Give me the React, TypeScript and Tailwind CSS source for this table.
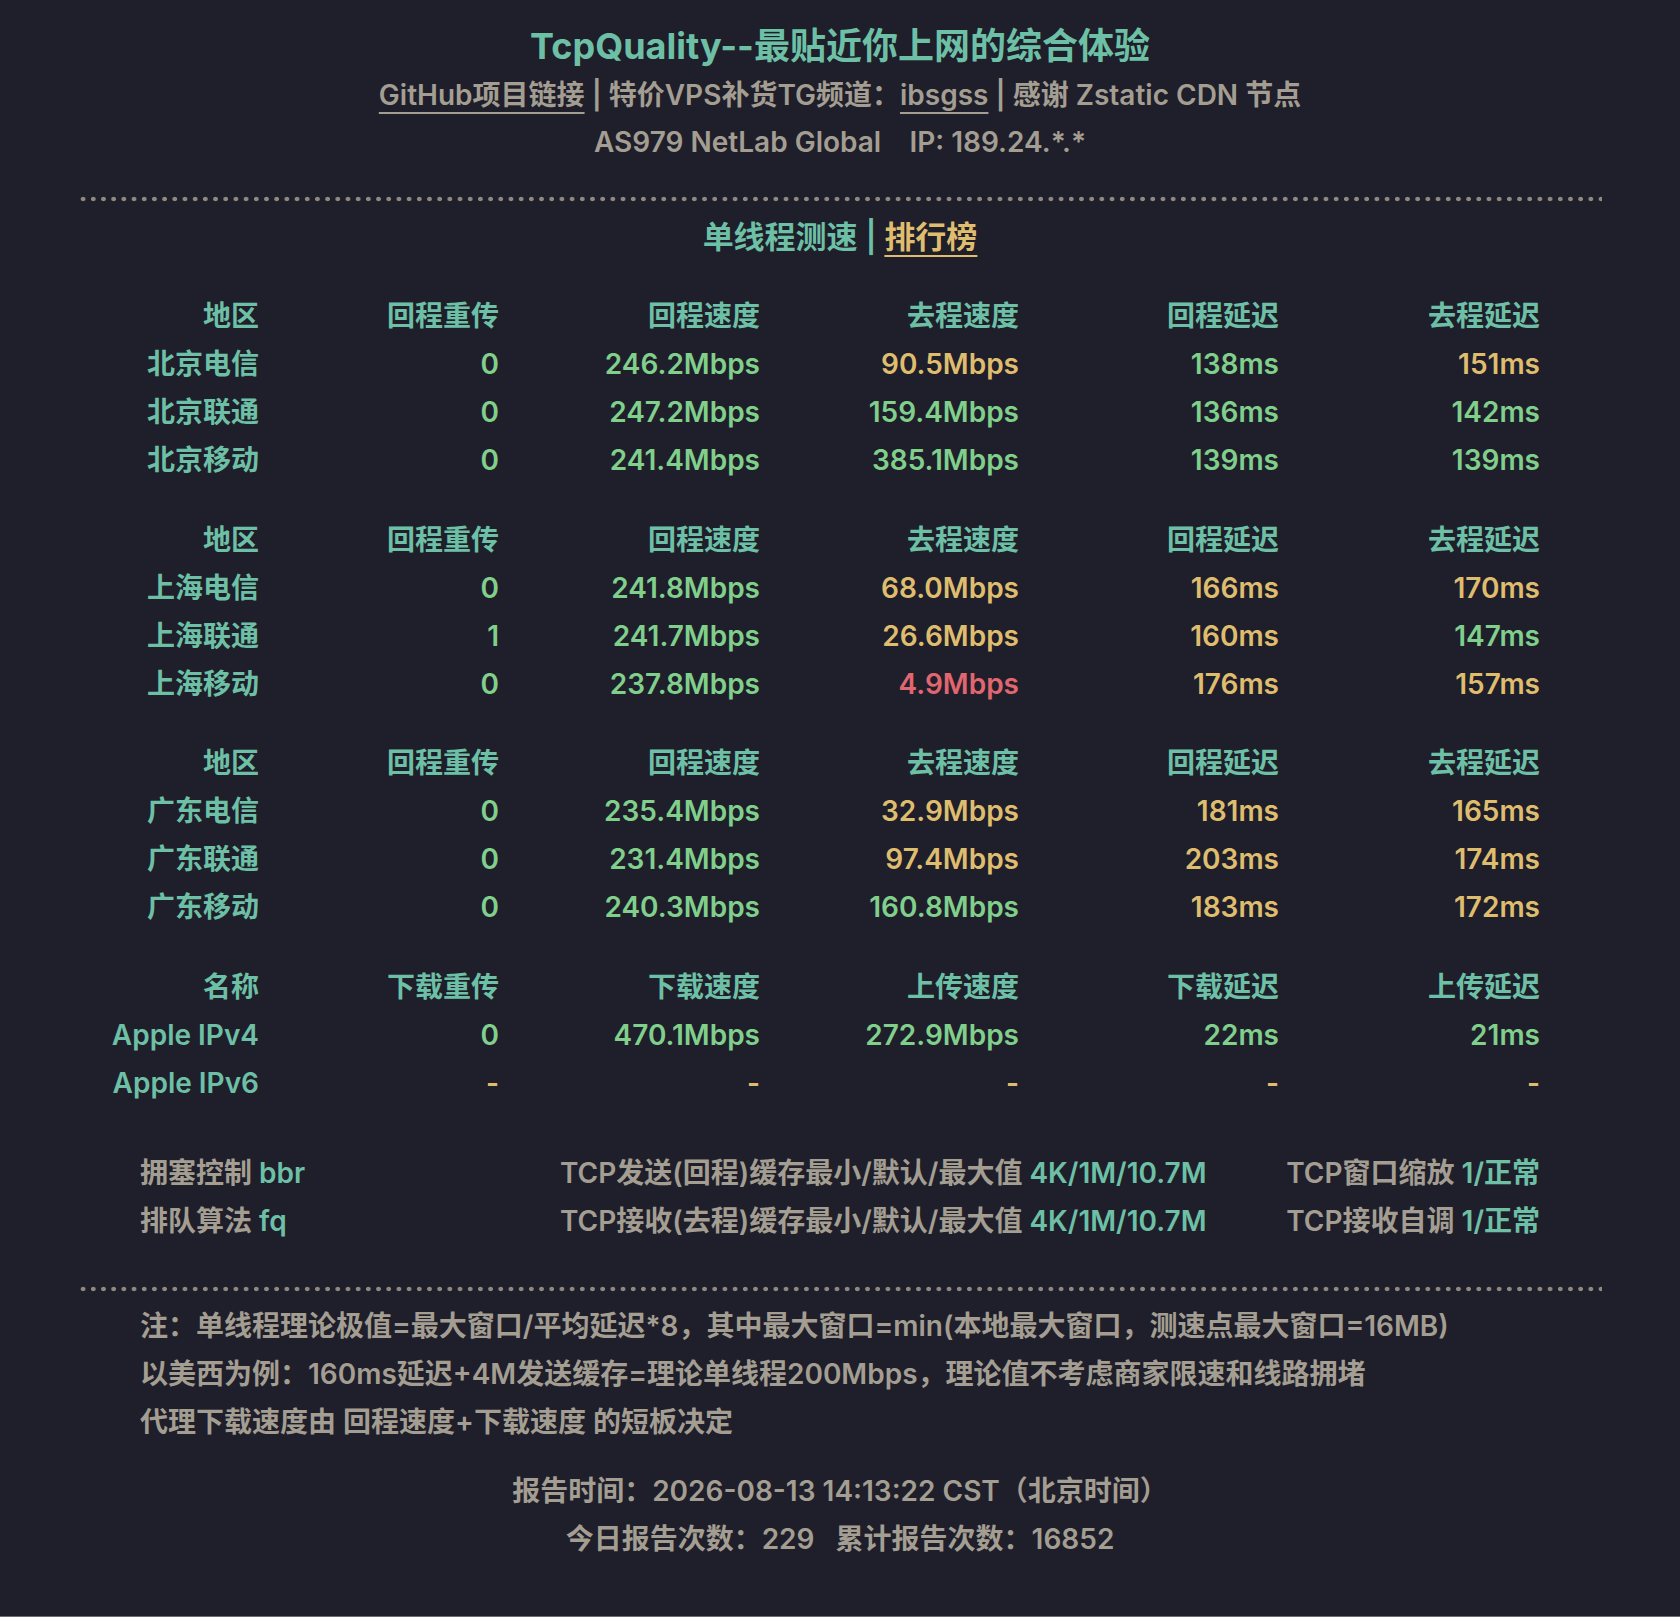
import React from "react";

type Tone = "g" | "y" | "r";

const tone: Record<Tone, string> = {
  g: "text-[#80cf8b]",
  y: "text-[#dfbd6e]",
  r: "text-[#e0666f]",
};

type Row = { name: string; cells: [string, Tone][] };
type Group = { head: string[]; rows: Row[] };

const speedHead = ["地区", "回程重传", "回程速度", "去程速度", "回程延迟", "去程延迟"];

const groups: Group[] = [
  {
    head: speedHead,
    rows: [
      { name: "北京电信", cells: [["0", "g"], ["246.2Mbps", "g"], ["90.5Mbps", "y"], ["138ms", "g"], ["151ms", "y"]] },
      { name: "北京联通", cells: [["0", "g"], ["247.2Mbps", "g"], ["159.4Mbps", "g"], ["136ms", "g"], ["142ms", "g"]] },
      { name: "北京移动", cells: [["0", "g"], ["241.4Mbps", "g"], ["385.1Mbps", "g"], ["139ms", "g"], ["139ms", "g"]] },
    ],
  },
  {
    head: speedHead,
    rows: [
      { name: "上海电信", cells: [["0", "g"], ["241.8Mbps", "g"], ["68.0Mbps", "y"], ["166ms", "y"], ["170ms", "y"]] },
      { name: "上海联通", cells: [["1", "g"], ["241.7Mbps", "g"], ["26.6Mbps", "y"], ["160ms", "y"], ["147ms", "g"]] },
      { name: "上海移动", cells: [["0", "g"], ["237.8Mbps", "g"], ["4.9Mbps", "r"], ["176ms", "y"], ["157ms", "y"]] },
    ],
  },
  {
    head: speedHead,
    rows: [
      { name: "广东电信", cells: [["0", "g"], ["235.4Mbps", "g"], ["32.9Mbps", "y"], ["181ms", "y"], ["165ms", "y"]] },
      { name: "广东联通", cells: [["0", "g"], ["231.4Mbps", "g"], ["97.4Mbps", "y"], ["203ms", "y"], ["174ms", "y"]] },
      { name: "广东移动", cells: [["0", "g"], ["240.3Mbps", "g"], ["160.8Mbps", "g"], ["183ms", "y"], ["172ms", "y"]] },
    ],
  },
  {
    head: ["名称", "下载重传", "下载速度", "上传速度", "下载延迟", "上传延迟"],
    rows: [
      { name: "Apple IPv4", cells: [["0", "g"], ["470.1Mbps", "g"], ["272.9Mbps", "g"], ["22ms", "g"], ["21ms", "g"]] },
      { name: "Apple IPv6", cells: [["-", "y"], ["-", "y"], ["-", "y"], ["-", "y"], ["-", "y"]] },
    ],
  },
];

const Dots = () => (
  <div className="h-[6px] w-full bg-[radial-gradient(circle,#8e8a7f_2px,transparent_2.6px)] bg-[length:10.2px_6px] bg-repeat-x" />
);

const cell = "h-[48px] leading-[48px] text-right whitespace-nowrap";

const App: React.FC = () => {
  return (
    <div className="min-h-[1617px] bg-[#1f1e2b] border-b border-[#6d6c76] font-['Inter','Noto_Sans_CJK_SC',sans-serif] font-semibold text-[28px] text-[#a39e91]">
      <div className="mx-auto w-[1524px] pt-[22px] pb-[52px]">
        {/* Header */}
        <div className="flex flex-col items-center">
          <h1 className="h-[50px] leading-[49px] text-[36px] font-bold text-[#6dc0a5]">
            TcpQuality--最贴近你上网的综合体验
          </h1>
          <div className="h-[46px] leading-[47px] whitespace-pre">
            <span className="underline decoration-2 underline-offset-[7px]">GitHub项目链接</span>
            <span> | </span>
            <span>特价VPS补货TG频道：</span>
            <span className="underline decoration-2 underline-offset-[7px]">ibsgss</span>
            <span> | </span>
            <span>感谢 Zstatic CDN 节点</span>
          </div>
          <div className="h-[48px] leading-[48px] whitespace-pre">AS979 NetLab Global    IP: 189.24.*.*</div>
        </div>

        <div className="mt-[30px]">
          <Dots />
        </div>

        <div className="mt-[11px] h-[48px] leading-[48px] text-center text-[31px] whitespace-pre text-[#6dc0a5]">
          单线程测速 | <span className="text-[#dfbd6e] underline decoration-2 underline-offset-[7px]">排行榜</span>
        </div>

        {/* Tables */}
        <div className="mt-[31px] ml-[22px] flex flex-col gap-[31.5px]">
          {groups.map((g, gi) => (
            <div key={gi} className="grid grid-cols-[159px_240px_261px_259px_260px_261px]">
              {g.head.map((h) => (
                <div key={h} className={`${cell} text-[#6dc0a5]`}>
                  {h}
                </div>
              ))}
              {g.rows.map((r) => (
                <React.Fragment key={r.name}>
                  <div className={`${cell} text-[#6dc0a5]`}>{r.name}</div>
                  {r.cells.map(([v, t], ci) => (
                    <div key={ci} className={`${cell} ${tone[t]}`}>
                      {v}
                    </div>
                  ))}
                </React.Fragment>
              ))}
            </div>
          ))}
        </div>

        {/* Kernel settings */}
        <div className="mt-[42px] ml-[62px] grid grid-cols-[420px_650px_330px]">
          <div className="h-[48px] leading-[48px]">
            拥塞控制 <span className="text-[#6dc0a5]">bbr</span>
          </div>
          <div className="h-[48px] leading-[48px] whitespace-nowrap">
            TCP发送(回程)缓存最小/默认/最大值 <span className="text-[#6dc0a5]">4K/1M/10.7M</span>
          </div>
          <div className="h-[48px] leading-[48px] text-right whitespace-nowrap">
            TCP窗口缩放 <span className="text-[#6dc0a5]">1/正常</span>
          </div>
          <div className="h-[48px] leading-[48px]">
            排队算法 <span className="text-[#6dc0a5]">fq</span>
          </div>
          <div className="h-[48px] leading-[48px] whitespace-nowrap">
            TCP接收(去程)缓存最小/默认/最大值 <span className="text-[#6dc0a5]">4K/1M/10.7M</span>
          </div>
          <div className="h-[48px] leading-[48px] text-right whitespace-nowrap">
            TCP接收自调 <span className="text-[#6dc0a5]">1/正常</span>
          </div>
        </div>

        <div className="mt-[41px]">
          <Dots />
        </div>

        {/* Notes */}
        <div className="mt-[10px] ml-[62px] flex flex-col">
          <div className="h-[48px] leading-[48px] whitespace-nowrap">
            注：单线程理论极值=最大窗口/平均延迟*8，其中最大窗口=min(本地最大窗口，测速点最大窗口=16MB)
          </div>
          <div className="h-[48px] leading-[48px] whitespace-nowrap">
            以美西为例：160ms延迟+4M发送缓存=理论单线程200Mbps，理论值不考虑商家限速和线路拥堵
          </div>
          <div className="h-[48px] leading-[48px] whitespace-nowrap">代理下载速度由 回程速度+下载速度 的短板决定</div>
        </div>

        {/* Footer */}
        <div className="mt-[21px] flex flex-col items-center">
          <div className="h-[48px] leading-[48px] whitespace-pre">报告时间：2026-08-13 14:13:22 CST（北京时间）</div>
          <div className="h-[48px] leading-[48px] whitespace-pre">今日报告次数：229   累计报告次数：16852</div>
        </div>
      </div>
    </div>
  );
};

export default App;
